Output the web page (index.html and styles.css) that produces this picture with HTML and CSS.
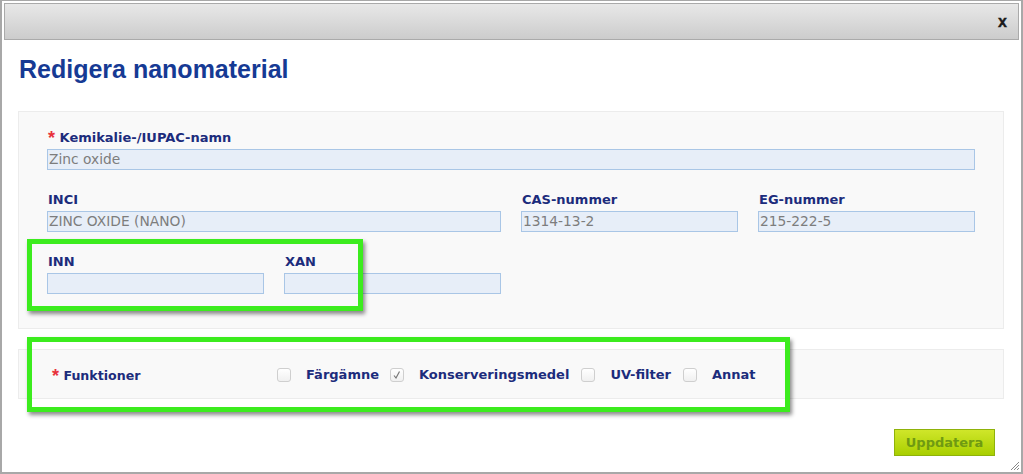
FILE: index.html
```html
<!DOCTYPE html>
<html lang="sv">
<head>
<meta charset="utf-8">
<title>Redigera nanomaterial</title>
<link rel="stylesheet" href="styles.css">
</head>
<body>
<div class="dialog">
  <div class="titlebar"><span class="close">x</span></div>
  <div class="content">
    <h1 class="title">Redigera nanomaterial</h1>
    <div class="panel panel-fields">
      <div class="grid">
        <div class="field span4">
          <label class="lbl"><span class="req">*</span> Kemikalie-/IUPAC-namn</label>
          <div class="inp">Zinc oxide</div>
        </div>
        <div class="field span2">
          <label class="lbl">INCI</label>
          <div class="inp">ZINC OXIDE (NANO)</div>
        </div>
        <div class="field">
          <label class="lbl">CAS-nummer</label>
          <div class="inp">1314-13-2</div>
        </div>
        <div class="field">
          <label class="lbl">EG-nummer</label>
          <div class="inp">215-222-5</div>
        </div>
        <div class="field">
          <label class="lbl">INN</label>
          <div class="inp"></div>
        </div>
        <div class="field">
          <label class="lbl">XAN</label>
          <div class="inp"></div>
        </div>
      </div>
    </div>
    <div class="panel panel-func">
      <span class="lbl func-lbl"><span class="req">*</span> Funktioner</span>
      <div class="checks">
        <span class="cb"></span><span class="lbl opt">Färgämne</span>
        <span class="cb checked"><svg viewBox="0 0 14 14" width="14" height="14"><path d="M4 7.5 L6 10 L9.5 3.5" fill="none" stroke="#777" stroke-width="1.2"/></svg></span><span class="lbl opt">Konserveringsmedel</span>
        <span class="cb"></span><span class="lbl opt">UV-filter</span>
        <span class="cb"></span><span class="lbl opt">Annat</span>
      </div>
    </div>
    <div class="actions"><button class="btn">Uppdatera</button></div>
  </div>
  <div class="hl hl1"></div>
  <div class="hl hl2"></div>
  <svg class="grip" width="10" height="10" viewBox="0 0 10 10"><path d="M1 9 L9 1 M4 9 L9 4 M7 9 L9 7" stroke="#888" stroke-width="1"/></svg>
</div>
</body>
</html>
```
FILE: styles.css
```css
* { box-sizing: border-box; }
html, body { margin: 0; padding: 0; background: #fff; }
.dialog {
  position: relative;
  width: 1023px;
  height: 474px;
  border: 2px solid #a8a8a8;
  border-top-width: 1px;
  background: #fff;
  overflow: hidden;
}
.titlebar {
  margin: 2px 2px 0 2px;
  height: 37px;
  border: 1px solid #aaaaaa;
  background: linear-gradient(#e8e8e8, #cccccc);
  display: flex;
  align-items: center;
  justify-content: flex-end;
  padding-right: 11px;
}
.close {
  font-family: "Liberation Sans", Arial, sans-serif;
  font-weight: bold;
  font-size: 16px;
  color: #1a1a1a;
  line-height: 1;
  margin-top: 0;
  -webkit-text-stroke: 0.4px #1a1a1a;
}
.content { padding: 0 17px 0 16px; }
.title {
  margin: 13px 0 0 1px;
  font-family: "Liberation Sans", Arial, sans-serif;
  font-weight: bold;
  font-size: 25px;
  line-height: 32px;
  color: #163a94;
  letter-spacing: 0;
}
.panel {
  background: #f9f9f9;
  border: 1px solid #ececec;
}
.panel-fields {
  margin-top: 26px;
  padding: 18px 28px 34px 28px;
}
.grid {
  display: grid;
  grid-template-columns: repeat(4, 217px);
  column-gap: 20px;
  row-gap: 22px;
}
.span4 { grid-column: span 4; }
.span2 { grid-column: span 2; }
.field { display: flex; flex-direction: column; }
.lbl {
  font-family: "DejaVu Sans", Verdana, sans-serif;
  font-weight: bold;
  font-size: 13px;
  line-height: 16px;
  color: #1c2c7c;
}
.field .lbl { margin: 0 0 3px 1px; }
.req {
  color: #e8323c;
  font-size: 18px;
  font-family: "Liberation Sans", Arial, sans-serif;
  line-height: 10px;
  position: relative;
  top: 2px;
}
.inp {
  height: 21px;
  border: 1px solid #a9c6e6;
  background: #e7eef8;
  font-family: "DejaVu Sans", Verdana, sans-serif;
  font-size: 13.8px;
  line-height: 19px;
  color: #7d7d7d;
  padding-left: 1px;
  white-space: nowrap;
  overflow: hidden;
}
.panel-func {
  margin-top: 20px;
  height: 50px;
  display: flex;
  align-items: center;
  padding-left: 33px;
}
.func-lbl { width: 225px; font-size: 12.6px; margin-top: 4px; }
.checks { display: flex; align-items: center; margin-top: 2px; }
.cb {
  width: 14px;
  height: 14px;
  border: 1px solid #cfcfcf;
  border-radius: 3px;
  background: linear-gradient(#ffffff, #f0f0f0);
  display: inline-block;
  margin-right: 15px;
}
.cb svg { display: block; margin: -1px 0 0 -1px; }
.opt { margin-right: 12px; font-size: 13px; }
.opt:nth-of-type(2), .opt:nth-of-type(3) { margin-right: 11px; }
.actions {
  display: flex;
  justify-content: flex-end;
  padding-right: 9px;
  margin-top: 30px;
}
.btn {
  width: 101px;
  height: 27px;
  border: 1px solid #8fb20a;
  background: linear-gradient(#cfe62a, #a9cf00);
  font-family: "DejaVu Sans", Verdana, sans-serif;
  font-weight: bold;
  font-size: 13px;
  color: #6f9a12;
  padding: 0;
}
.hl {
  position: absolute;
  border: 5px solid #3cec1e;
  box-shadow: 2px 3px 4px rgba(0,0,0,0.45);
  pointer-events: none;
}
.hl1 { left: 25px; top: 238px; width: 336px; height: 72px; }
.hl2 { left: 25px; top: 336px; width: 763px; height: 75px; }
.grip { position: absolute; right: 1px; bottom: 1px; }
```
